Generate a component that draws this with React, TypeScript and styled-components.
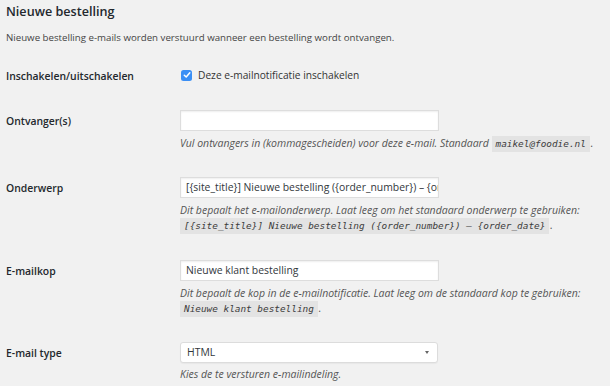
import React from "react";
import styled, { createGlobalStyle } from "styled-components";

const Global = createGlobalStyle`
  html, body { margin: 0; padding: 0; background: #f1f1f1; }
  body { font-family: "Open Sans", "Noto Sans", sans-serif; color: #444; }
  * { box-sizing: border-box; }
`;

const Page = styled.div`
  padding: 2px 6px 0 6px;
  width: 610px;
  height: 386px;
  overflow: hidden;
`;

const Title = styled.h2`
  margin: 0;
  font-size: 12.6px;
  line-height: 20px;
  font-weight: 600;
  color: #23282d;
`;

const Intro = styled.p`
  margin: 8px 0 0 0;
  font-size: 9.7px;
  line-height: 15px;
  color: #444;
`;

const Table = styled.div`
  display: flex;
  flex-direction: column;
  margin-top: 23px;
`;

const Row = styled.div<{ $gap: number }>`
  display: grid;
  grid-template-columns: 174px 1fr;
  margin-bottom: ${(p) => p.$gap}px;
`;

const Label = styled.div<{ $top: number }>`
  font-size: 10.4px;
  font-weight: 600;
  line-height: 14px;
  color: #23282d;
  padding-top: ${(p) => p.$top}px;
`;

const Field = styled.div`
  display: flex;
  flex-direction: column;
  align-items: flex-start;
`;

const CheckLine = styled.label`
  display: flex;
  align-items: center;
  gap: 6px;
  font-size: 10.2px;
  line-height: 14px;
  color: #333;
`;

const Box = styled.span`
  width: 11px;
  height: 11px;
  border-radius: 2.5px;
  background: #3b8ff5;
  display: inline-flex;
  align-items: center;
  justify-content: center;
  margin-left: 1px;
`;

const Input = styled.div`
  width: 259px;
  height: 21px;
  background: #fff;
  border: 1px solid #dddddd;
  box-shadow: inset 0 1px 2px rgba(0, 0, 0, 0.07);
  font-size: 10.4px;
  line-height: 19px;
  color: #32373c;
  padding: 0 5px;
  white-space: nowrap;
  overflow: hidden;
`;

const Select = styled.div`
  width: 258px;
  height: 21px;
  background: #fff;
  border: 1px solid #dcdcdc;
  border-radius: 3px;
  box-shadow: 0 1px 1px rgba(0, 0, 0, 0.04);
  font-size: 10.4px;
  line-height: 19px;
  color: #32373c;
  padding: 0 6px 0 6px;
  display: flex;
  justify-content: space-between;
  align-items: center;
`;

const Arrow = styled.span`
  width: 0;
  height: 0;
  border-left: 2.5px solid transparent;
  border-right: 2.5px solid transparent;
  border-top: 3px solid #666;
  margin-right: 2px;
`;

const Desc = styled.p<{ $top?: number }>`
  margin: ${(p) => p.$top ?? 5}px 0 0 0;
  font-size: 10.5px;
  line-height: 14px;
  font-style: italic;
  color: #555;
`;

const Code = styled.code`
  font-family: "DejaVu Sans Mono", "Liberation Mono", monospace;
  font-size: 9.4px;
  font-style: italic;
  background: #e3e3e3;
  padding: 2px 4px 3px 4px;
  margin: 0 1px 0 0;
  color: #3c3c3c;
`;

const CodeLine = styled.span`
  display: inline-block;
  margin-top: 0;
  line-height: 16px;
`;

export default function App() {
  return (
    <Page>
      <Global />
      <Title>Nieuwe bestelling</Title>
      <Intro>Nieuwe bestelling e-mails worden verstuurd wanneer een bestelling wordt ontvangen.</Intro>
      <Table>
        <Row $gap={27}>
          <Label $top={1}>Inschakelen/uitschakelen</Label>
          <Field>
            <CheckLine>
              <Box>
                <svg width="8" height="8" viewBox="0 0 8 8">
                  <path d="M1.3 4.2 L3.2 6 L6.8 1.8" stroke="#fff" strokeWidth="1.5" fill="none" strokeLinecap="round" strokeLinejoin="round" />
                </svg>
              </Box>
              Deze e-mailnotificatie inschakelen
            </CheckLine>
          </Field>
        </Row>
        <Row $gap={26}>
          <Label $top={4}>Ontvanger(s)</Label>
          <Field>
            <Input />
            <Desc>
              Vul ontvangers in (kommagescheiden) voor deze e-mail. Standaard <Code>maikel@foodie.nl</Code>.
            </Desc>
          </Field>
        </Row>
        <Row $gap={26}>
          <Label $top={4}>Onderwerp</Label>
          <Field>
            <Input>[{"{"}site_title{"}"}] Nieuwe bestelling ({"{"}order_number{"}"}) – {"{"}order_date{"}"}</Input>
            <Desc>
              Dit bepaalt het e-mailonderwerp. Laat leeg om het standaard onderwerp te gebruiken:
              <br />
              <CodeLine>
                <Code>[{"{"}site_title{"}"}] Nieuwe bestelling ({"{"}order_number{"}"}) – {"{"}order_date{"}"}</Code>.
              </CodeLine>
            </Desc>
          </Field>
        </Row>
        <Row $gap={25}>
          <Label $top={4}>E-mailkop</Label>
          <Field>
            <Input>Nieuwe klant bestelling</Input>
            <Desc>
              Dit bepaalt de kop in de e-mailnotificatie. Laat leeg om de standaard kop te gebruiken:
              <br />
              <CodeLine>
                <Code>Nieuwe klant bestelling</Code>.
              </CodeLine>
            </Desc>
          </Field>
        </Row>
        <Row $gap={0}>
          <Label $top={4}>E-mail type</Label>
          <Field>
            <Select>
              <span>HTML</span>
              <Arrow />
            </Select>
            <Desc $top={4}>Kies de te versturen e-mailindeling.</Desc>
          </Field>
        </Row>
      </Table>
    </Page>
  );
}
